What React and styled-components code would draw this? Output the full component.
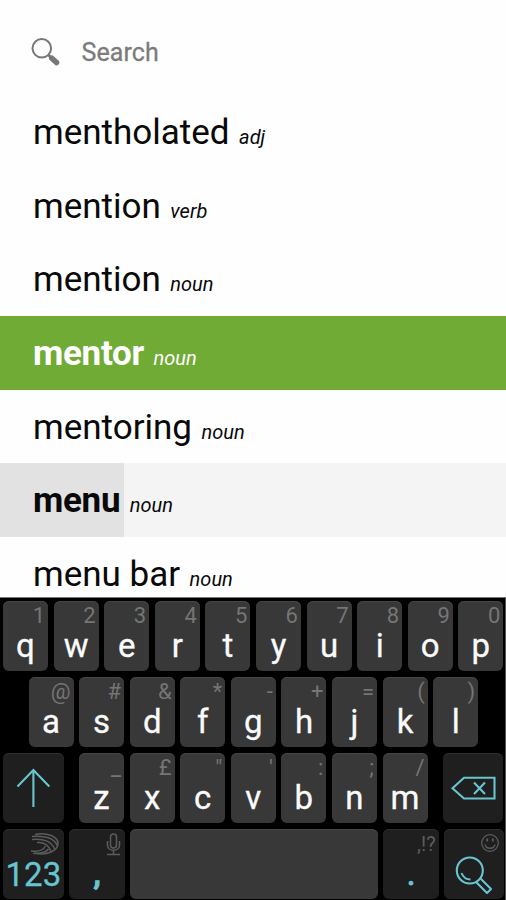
import styled, { createGlobalStyle, css } from 'styled-components'

const GlobalStyle = createGlobalStyle`
	* {
		box-sizing: border-box;
	}
	body {
		margin: 0;
		background: #fefefe;
		font-family: Roboto, 'Liberation Sans', sans-serif;
	}
`

const teal = '#68c5d0'

const Screen = styled.div`
	width: 506px;
	height: 900px;
	display: flex;
	flex-direction: column;
	overflow: hidden;
	background: #fefefe;
`

const SearchBar = styled.div`
	flex: none;
	height: 95px;
	padding: 37px 0 0 31px;
	display: flex;
	align-items: flex-start;
	gap: 21.5px;
`

const SearchLabel = styled.span`
	color: #7b7b7b;
	font-size: 25px;
	line-height: 32px;
	letter-spacing: 0.1px;
	-webkit-text-stroke: 0.3px #7b7b7b;
`

const WordList = styled.div`
	flex: 1;
	min-height: 0;
	overflow: hidden;
`

const WordRow = styled.div`
	height: 73.7px;
	padding: 16px 0 0 33px;
	line-height: 44px;
	white-space: nowrap;
	color: ${({ $state }) => ($state === 'selected' ? '#fff' : '#090909')};
	background: ${({ $state }) =>
		$state === 'selected'
			? '#70ab36'
			: $state === 'pressed'
				? 'linear-gradient(90deg, #e2e2e2 124px, #f4f4f4 124px)'
				: 'transparent'};
`

const Word = styled.span`
	font-size: 35px;
	font-weight: ${({ $bold }) => ($bold ? 700 : 400)};
	letter-spacing: ${({ $bold }) => ($bold ? '-0.3px' : '0')};
`

const Kind = styled.span`
	margin-left: 9.5px;
	font-size: 20px;
	font-style: italic;
`

const Keyboard = styled.div`
	flex: none;
	height: 303px;
	padding: 3px 3px 0;
	border-top: 1px solid #777;
	border-right: 1px solid #555;
	background: #000;
	display: flex;
	flex-direction: column;
	gap: 5.7px;
`

const KeyRow = styled.div`
	display: flex;
	gap: 5.6px;
	padding-left: ${({ $indent }) => $indent || 0}px;
`

const KeyBox = styled.div`
	flex: none;
	position: relative;
	width: ${({ $width }) => $width || 45}px;
	height: 70.2px;
	margin-left: ${({ $before }) => $before || 0}px;
	border-radius: 6px;
	display: flex;
	justify-content: center;
	color: #fafafa;
	background: #383838;
	box-shadow: inset 0 1px 0 #464646;
	${({ $dark }) =>
		$dark &&
		css`
			color: ${teal};
			background: #1f1f1f;
			box-shadow: inset 0 1px 0 #303030;
		`}
`

const Letter = styled.span`
	padding-top: ${({ $top }) => $top || 24}px;
	font-size: 33px;
	line-height: 42px;
	-webkit-text-stroke: ${({ $stroke }) => $stroke || 0.3}px currentColor;
`

const Hint = styled.span`
	position: absolute;
	top: 2px;
	right: 3px;
	color: ${({ $dim }) => ($dim ? '#5c5c5c' : '#757575')};
	font-size: ${({ $dim }) => ($dim ? 20 : 22)}px;
	line-height: 26px;
`

const KeyIcon = styled.svg`
	position: absolute;
	top: 0;
	left: 0;
	fill: none;
	stroke: ${({ $dim }) => ($dim ? '#5c5c5c' : teal)};
	stroke-width: ${({ $dim }) => ($dim ? 1.5 : 2.1)};
`

const words = [
	{ word: 'mentholated', kind: 'adj' },
	{ word: 'mention', kind: 'verb' },
	{ word: 'mention', kind: 'noun' },
	{ word: 'mentor', kind: 'noun', state: 'selected' },
	{ word: 'mentoring', kind: 'noun' },
	{ word: 'menu', kind: 'noun', state: 'pressed' },
	{ word: 'menu bar', kind: 'noun' },
]

const topRow = ['q1', 'w2', 'e3', 'r4', 't5', 'y6', 'u7', 'i8', 'o9', 'p0']
const homeRow = ['a@', 's#', 'd&', 'f*', 'g-', 'h+', 'j=', 'k(', 'l)']
const bottomRow = ['z_', 'x£', 'c"', "v'", 'b:', 'n;', 'm/']

const SearchIcon = () => (
	<svg width="29" height="30" viewBox="0 0 29 30" fill="none" stroke="#777">
		<circle cx="10.8" cy="11.3" r="9.3" strokeWidth="2" />
		<path d="M17 17.5l4 4" strokeWidth="2.6" />
		<path d="M20.8 21.2l4.7 4.3" strokeWidth="5.6" strokeLinecap="round" />
	</svg>
)

const ShiftIcon = () => (
	<KeyIcon width="61" height="70">
		<path d="M30.4 54V17M14.5 33.5l15.900-16.500 15.900 16.500" />
	</KeyIcon>
)

const BackspaceIcon = () => (
	<KeyIcon width="60" height="70">
		<path d="M9.5 35.3L21 24.7h30.500v20.800H21z" />
		<path d="M31 29.500l11 11.500M42 29.500l-11 11.500" />
	</KeyIcon>
)

const SwiftIcon = () => (
	<KeyIcon $dim width="61" height="70">
		<path d="M32 5.500C43 3 55 7 55 14.500c0 7-11 12.500-23 9.500" />
		<path d="M29 7.500c12-1.500 23 2 25 9M29 10.500c11-1.500 20 2 22.500 9.500" />
		<path d="M34 13.500c7-.5 12 3 14 9M28 22c7 1 12-.500 14.500-5M30 24.500c8 0 13-1 15.500-4.500" />
	</KeyIcon>
)

const MicIcon = () => (
	<KeyIcon $dim width="56" height="70">
		<rect x="41.5" y="5" width="6" height="14" rx="3" />
		<path d="M38.5 12v4c0 7 12 7 12 0v-4M44.5 21.500v4M38 25.500h13" />
	</KeyIcon>
)

const EnterIcons = () => (
	<KeyIcon width="60" height="70">
		<g stroke="#5c5c5c" strokeWidth="1.3">
			<circle cx="46" cy="14" r="8.3" />
			<path d="M41 15.500c1 5 9 5 10 0" />
			<path d="M43.200 9.500v3M48.800 9.500v3" strokeWidth="1.8" />
		</g>
		<circle cx="25.800" cy="41.500" r="13" />
		<path d="M17.500 44c1.500 4 4.500 6.500 9 6.500" strokeWidth="2" />
		<path d="M32.500 53.500l10.500 10.500 4-4-10.500-10.500" strokeLinejoin="round" />
	</KeyIcon>
)

const Key = ({ pair, before }) => (
	<KeyBox $before={before}>
		<Hint>{pair[1]}</Hint>
		<Letter>{pair[0]}</Letter>
	</KeyBox>
)

const App = () => (
	<Screen>
		<GlobalStyle />
		<SearchBar>
			<SearchIcon />
			<SearchLabel>Search</SearchLabel>
		</SearchBar>
		<WordList>
			{words.map(({ word, kind, state }) => (
				<WordRow key={word + kind} $state={state}>
					<Word $bold={!!state}>{word}</Word>
					<Kind>{kind}</Kind>
				</WordRow>
			))}
		</WordList>
		<Keyboard>
			<KeyRow>
				{topRow.map((pair) => (
					<Key key={pair} pair={pair} />
				))}
			</KeyRow>
			<KeyRow $indent={25.5}>
				{homeRow.map((pair) => (
					<Key key={pair} pair={pair} />
				))}
			</KeyRow>
			<KeyRow>
				<KeyBox $dark $width={60.8}>
					<ShiftIcon />
				</KeyBox>
				{bottomRow.map((pair, i) => (
					<Key key={pair} pair={pair} before={i === 0 ? 9.6 : 0} />
				))}
				<KeyBox $dark $width={59.4} $before={10.3}>
					<BackspaceIcon />
				</KeyBox>
			</KeyRow>
			<KeyRow>
				<KeyBox $dark $width={60.8}>
					<SwiftIcon />
					<Letter $top={25}>123</Letter>
				</KeyBox>
				<KeyBox $dark $width={55.4}>
					<MicIcon />
					<Letter $stroke={1.5}>,</Letter>
				</KeyBox>
				<KeyBox $width={247.4} />
				<KeyBox $dark $width={55.3}>
					<Hint $dim>,!?</Hint>
					<Letter $stroke={1}>.</Letter>
				</KeyBox>
				<KeyBox $dark $width={59.4}>
					<EnterIcons />
				</KeyBox>
			</KeyRow>
		</Keyboard>
	</Screen>
)

export default App
